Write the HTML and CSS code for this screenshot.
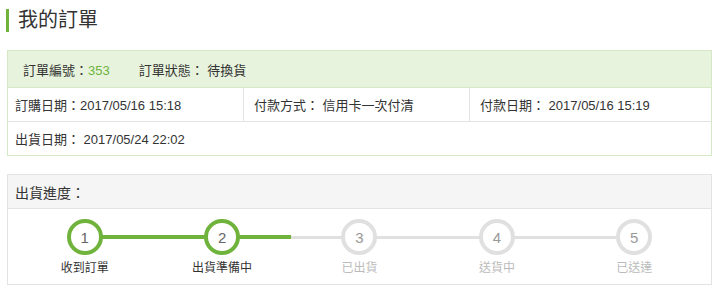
FILE: index.html
```html
<!DOCTYPE html>
<html lang="zh-Hant">
<head>
    <meta charset="UTF-8">
    <meta name="viewport" content="width=device-width, initial-scale=1.0">
    <title>我的訂單</title>
    <link rel="stylesheet" href="styles.css">
</head>
<body>
    <h1 class="page-title">我的訂單</h1>

    <div class="wrap">
        <div class="order-box">
            <div class="order-head">
                <span>訂單編號：<em class="order-no">353</em></span>
                <span>訂單狀態： 待換貨</span>
            </div>
            <div class="order-row three">
                <div class="cell">訂購日期：2017/05/16 15:18</div>
                <div class="cell">付款方式： 信用卡一次付清</div>
                <div class="cell">付款日期： 2017/05/16 15:19</div>
            </div>
            <div class="order-row">
                <div class="cell">出貨日期： 2017/05/24 22:02</div>
            </div>
        </div>

        <div class="track-box">
            <div class="track-head">出貨進度：</div>
            <ol class="steps">
                <li class="step done"><span class="dot">1</span><span class="label">收到訂單</span></li>
                <li class="step done current"><span class="dot">2</span><span class="label">出貨準備中</span></li>
                <li class="step"><span class="dot">3</span><span class="label">已出貨</span></li>
                <li class="step"><span class="dot">4</span><span class="label">送貨中</span></li>
                <li class="step"><span class="dot">5</span><span class="label">已送達</span></li>
            </ol>
        </div>
    </div>
</body>
</html>
```

FILE: styles.css
```css
body {
    margin: 0;
    background: #fff;
    color: #333;
    font-family: "Liberation Sans", "Noto Sans CJK TC", sans-serif;
}

.page-title {
    margin: 9px 0 18px 6px;
    padding-left: 9px;
    border-left: 3px solid #6fb33c;
    font-size: 20px;
    font-weight: normal;
    line-height: 23px;
    color: #333;
}

.wrap { padding: 0 8px 0 7px; }

/* order info */
.order-box {
    border: 1px solid #d6e9c6;
    font-size: 13px;
}
.order-head {
    display: flex;
    gap: 29px;
    height: 36px;
    align-items: center;
    padding-left: 15px;
    background: #e7f3dd;
    border-bottom: 1px solid #d6e9c6;
}
.order-no { font-style: normal; color: #6fb33c; }
.order-row {
    display: grid;
    grid-template-columns: 1fr;
    height: 33px;
}
.order-row.three {
    grid-template-columns: 235px 226px 1fr;
    border-bottom: 1px solid #e3e3e3;
}
.cell {
    display: flex;
    align-items: center;
    padding-left: 7px;
}
.order-row.three .cell + .cell { border-left: 1px solid #e3e3e3; padding-left: 10px; }

/* shipping progress */
.track-box {
    margin-top: 18px;
    border: 1px solid #e3e3e3;
}
.track-head {
    height: 33px;
    display: flex;
    align-items: center;
    padding-left: 7px;
    background: #f5f5f5;
    border-bottom: 1px solid #e3e3e3;
    font-size: 14px;
}
.steps {
    list-style: none;
    margin: 0;
    padding: 10px 8px 8px;
    display: grid;
    grid-template-columns: repeat(5, 1fr);
}
.step {
    position: relative;
    display: flex;
    flex-direction: column;
    align-items: center;
    gap: 5px;
}
.step::before,
.step::after {
    content: "";
    position: absolute;
    top: 17px;
    height: 3px;
    width: 50%;
    background: #e0e0e0;
}
.step::before { left: 0; }
.step::after { right: 0; }
.step:first-child::before,
.step:last-child::after { display: none; }
.step.done::before,
.step.done::after {
    background: #6fb33c;
    height: 4px;
    top: 16px;
}
.dot {
    position: relative;
    z-index: 1;
    width: 28px;
    height: 28px;
    border: 4px solid #e0e0e0;
    border-radius: 50%;
    background: #fff;
    display: flex;
    align-items: center;
    justify-content: center;
    font-size: 15px;
    color: #999;
}
.step.done .dot { border-color: #6fb33c; color: #666; }
.label {
    font-size: 12px;
    color: #bbb;
    line-height: 16px;
}
.step.done .label { color: #333; }
```
